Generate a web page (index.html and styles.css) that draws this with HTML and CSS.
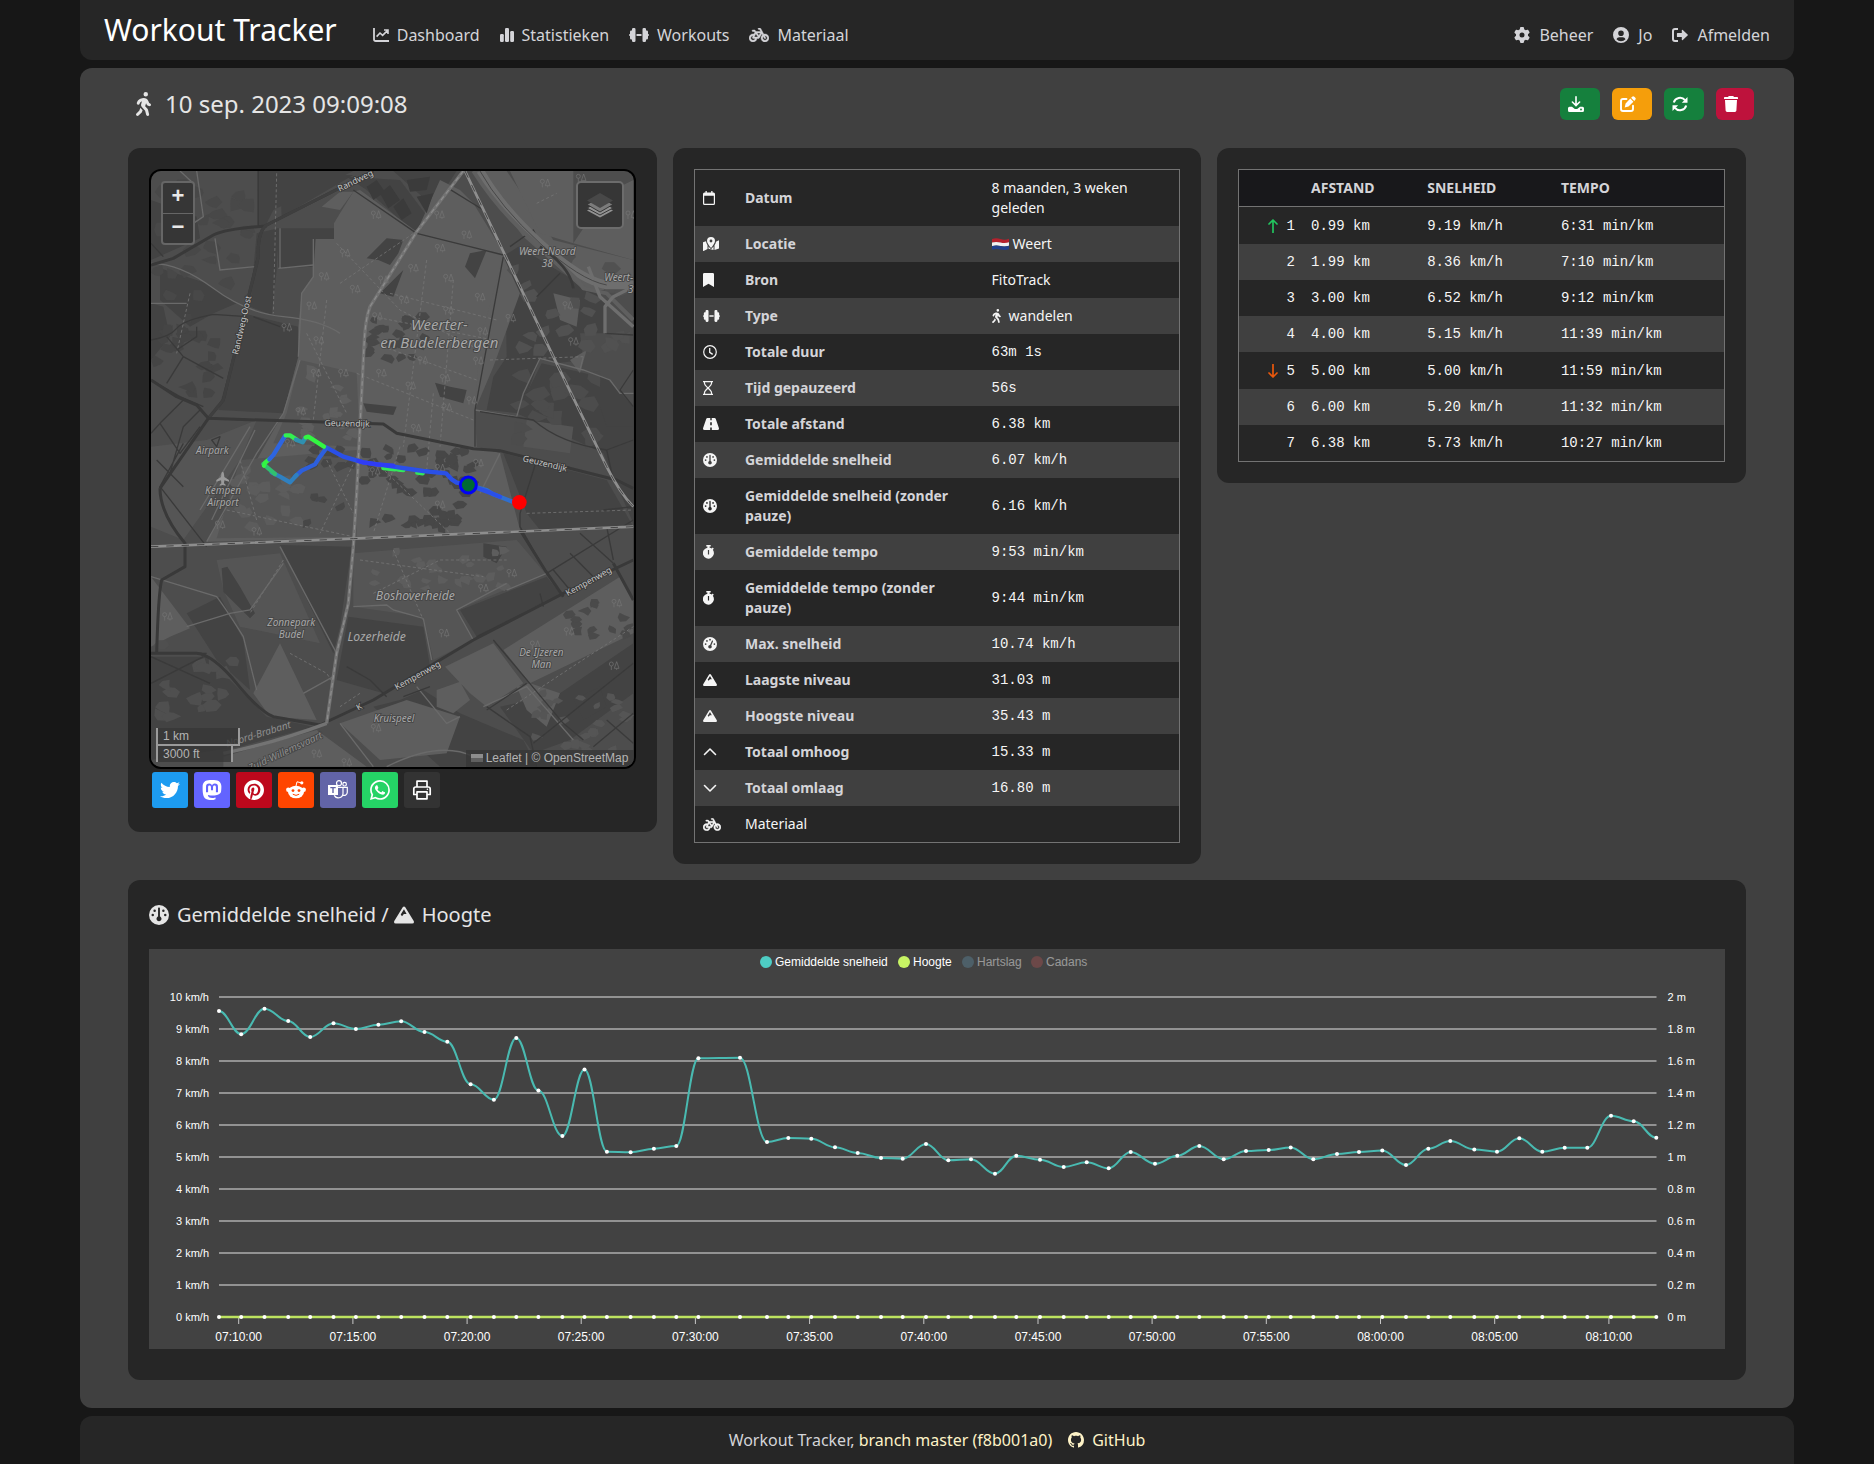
FILE: index.html
```html
<!DOCTYPE html>
<html lang="nl">
<head>
<meta charset="utf-8">
<title>Workout Tracker</title>
<link rel="stylesheet" href="styles.css">
</head>
<body>
<svg class="sprite" aria-hidden="true">
  <symbol id="i-line" viewBox="0 0 16 14"><path d="M1 0v11.2q0 1.8 1.8 1.8H16" fill="none" stroke="currentColor" stroke-width="1.8"/><path d="M3.6 8.6 7 5l2.6 2.4L14.4 2.6M11 2h4v4" fill="none" stroke="currentColor" stroke-width="1.6"/></symbol>
  <symbol id="i-bars" viewBox="0 0 14 14"><rect x="0" y="6" width="3.8" height="8" rx="1.2"/><rect x="5" y="0" width="4" height="14" rx="1.2"/><rect x="10.2" y="3" width="3.8" height="11" rx="1.2"/></symbol>
  <symbol id="i-dumbbell" viewBox="0 0 20 14"><path d="M3 1.300Q3 0 4.300 0h.9q1.300 0 1.300 1.300v11.400q0 1.300-1.300 1.300h-.9Q3 14 3 12.700V11.500H2.300Q1 11.500 1 10.200V8Q0 8 0 7t1-1V3.800Q1 2.500 2.300 2.500H3zM17 1.300Q17 0 15.700 0h-.9q-1.300 0-1.300 1.300v11.400q0 1.300 1.300 1.300h.9q1.300 0 1.300-1.300V11.500h.7q1.300 0 1.300-1.300V8q1 0 1-1t-1-1V3.800q0-1.300-1.300-1.300H17zM7.500 6h5v2h-5z"/></symbol>
  <symbol id="i-bike" viewBox="0 32 640 448"><path d="M312 32c-13.300 0-24 10.700-24 24s10.700 24 24 24h25.700l34.600 64H222.900l-27.400-38C191 99.700 183.700 96 176 96H120c-13.300 0-24 10.700-24 24s10.700 24 24 24h43.700l22.100 30.700-26.600 53.100c-10-2.500-20.500-3.800-31.200-3.800C57.300 224 0 281.300 0 352s57.300 128 128 128c65.300 0 119.100-48.900 127-112h49c8.500 0 16.300-4.500 20.700-11.800l84.800-143.500 21.700 40.100C402.400 276.300 384 312 384 352c0 70.700 57.300 128 128 128s128-57.300 128-128s-57.300-128-128-128c-13.500 0-26.500 2.100-38.700 6L375.400 48.800C369.800 38.400 359 32 347.200 32H312zM458.600 303.700l32.300 59.700c6.300 11.700 20.900 16 32.500 9.700s16-20.900 9.700-32.500l-32.300-59.700c3.600-.6 7.400-.9 11.200-.9c39.800 0 72 32.200 72 72s-32.200 72-72 72s-72-32.200-72-72c0-18.600 7-35.500 18.600-48.300zM133.200 368h65c-7.300 32.100-36 56-70.200 56c-39.800 0-72-32.200-72-72s32.200-72 72-72c1.700 0 3.400 .1 5.100 .2l-24.200 48.500c-9 18.100 4.100 39.400 24.300 39.400zm33.700-48l50.700-101.300 72.900 101.200-.1 .1H166.800zm90.600-128H365.900L317 274.800 257.400 192z" stroke="currentColor" stroke-width="14"/></symbol>
  <symbol id="i-gear" viewBox="0 0 512 512"><path d="M495.900 166.600c3.200 8.700 .5 18.400-6.400 24.600l-43.300 39.400c1.100 8.300 1.700 16.800 1.700 25.400s-.6 17.100-1.700 25.400l43.300 39.400c6.900 6.200 9.600 15.900 6.400 24.600c-4.400 11.900-9.700 23.300-15.800 34.300l-4.700 8.100c-6.600 11-14 21.400-22.100 31.200c-5.900 7.200-15.700 9.600-24.500 6.800l-55.700-17.700c-13.400 10.300-28.200 18.900-44 25.400l-12.500 57.100c-2 9.100-9 16.300-18.200 17.800c-13.800 2.300-28 3.500-42.500 3.500s-28.700-1.200-42.500-3.500c-9.200-1.500-16.200-8.700-18.200-17.800l-12.500-57.100c-15.800-6.500-30.600-15.100-44-25.400L83.100 425.900c-8.800 2.800-18.600 .3-24.500-6.800c-8.100-9.800-15.500-20.200-22.100-31.200l-4.700-8.100c-6.100-11-11.400-22.400-15.800-34.300c-3.200-8.700-.5-18.400 6.400-24.600l43.300-39.400C64.600 273.100 64 264.600 64 256s.6-17.100 1.700-25.400L22.400 191.200c-6.900-6.200-9.600-15.900-6.400-24.600c4.400-11.900 9.700-23.300 15.800-34.300l4.700-8.100c6.600-11 14-21.400 22.100-31.200c5.900-7.200 15.700-9.600 24.500-6.800l55.700 17.700c13.400-10.300 28.200-18.900 44-25.400l12.500-57.100c2-9.100 9-16.300 18.200-17.800C227.300 1.200 241.500 0 256 0s28.700 1.200 42.500 3.500c9.200 1.500 16.200 8.700 18.200 17.800l12.500 57.100c15.800 6.500 30.600 15.100 44 25.400l55.700-17.700c8.800-2.800 18.600-.3 24.500 6.800c8.100 9.800 15.500 20.200 22.100 31.200l4.700 8.100c6.100 11 11.400 22.400 15.800 34.300zM256 336a80 80 0 1 0 0-160 80 80 0 1 0 0 160z"/></symbol>
  <symbol id="i-user" viewBox="0 0 16 16"><path fill-rule="evenodd" d="M8 0a8 8 0 1 1 0 16A8 8 0 0 1 8 0zM8 3.400a2.800 2.800 0 1 0 0 5.600 2.800 2.800 0 0 0 0-5.600zM3.500 12.300a6.200 6.200 0 0 0 9 0C12 11 11 10.300 9.800 10.300H6.200c-1.200 0-2.200.7-2.700 2z"/></symbol>
  <symbol id="i-logout" viewBox="0 0 16 14"><path d="M6 1H3Q1 1 1 3v8q0 2 2 2h3" fill="none" stroke="currentColor" stroke-width="2"/><path d="M5.500 5h4.300V2.200q.2-.9 1-.3L15.600 6.500q.6.500 0 1l-4.800 4.600q-.8.500-1-.3V9H5.500q-.6 0-.6-.6V5.600Q4.900 5 5.500 5z"/></symbol>
  <symbol id="i-walk" viewBox="0 0 320 512"><path d="M160 48a48 48 0 1 1 96 0 48 48 0 1 1-96 0zM126.500 199.300c-1 .4-1.900 .8-2.900 1.200l-8 3.500c-16.400 7.300-29 21.200-34.700 38.200l-2.600 7.800c-5.600 16.800-23.700 25.800-40.500 20.200s-25.800-23.700-20.200-40.500l2.600-7.800c11.400-34.100 36.600-61.900 69.400-76.500l8-3.500c20.800-9.200 43.300-14 66.100-14c44.600 0 84.800 26.800 101.900 67.900L281 232.700l21.400 10.700c15.800 7.900 22.200 27.100 14.300 42.900s-27.100 22.200-42.900 14.300L247 287.300c-10.300-5.200-18.400-13.800-22.800-24.500l-9.600-23-19.300 65.500 49.500 54c5.400 5.900 9.200 13 11.200 20.800l23 92.100c4.300 17.100-6.100 34.500-23.300 38.800s-34.500-6.100-38.800-23.300l-22-88.100-70.700-77.100c-14.800-16.100-20.300-38.600-14.700-59.700l16.900-63.500zM68.700 398l25-62.400c2.100 3 4.500 5.800 7 8.600l40.700 44.400-14.500 36.200c-2.400 6-6 11.500-10.600 16.100L54.600 502.600c-12.500 12.500-32.800 12.500-45.300 0s-12.500-32.800 0-45.300L68.700 398z"/></symbol>
  <symbol id="i-download" viewBox="0 0 16 16"><path d="M8 .8v8.400M4.400 6 8 9.600 11.600 6" fill="none" stroke="currentColor" stroke-width="1.600" stroke-linecap="round"/><path fill-rule="evenodd" d="M1.500 10.800H4L6.800 13h2.400l2.800-2.200h2.500q1.500 0 1.500 1.500v2.200q0 1.500-1.500 1.500h-13Q0 16 0 14.500v-2.200q0-1.500 1.500-1.500zM13 12.600a.9.900 0 1 0 0 1.800.9.900 0 0 0 0-1.800z"/></symbol>
  <symbol id="i-edit" viewBox="0 0 16 16"><path d="M6.500 3H3Q1 3 1 5v8q0 2 2 2h8q2 0 2-2V9.700" fill="none" stroke="currentColor" stroke-width="1.900" stroke-linecap="round"/><path d="M12 .9q1-1.200 2.300-.2l1 1q1 1.200-.2 2.300l-.9.900-3.100-3.100zM10.300 2.600l3.100 3.100-4.900 4.900-3.800 1 .9-4z"/></symbol>
  <symbol id="i-refresh" viewBox="0 0 16 16"><path d="M1.800 6.500A6.400 6.400 0 0 1 13 4.200M14.200 9.500A6.400 6.400 0 0 1 3 11.800" fill="none" stroke="currentColor" stroke-width="2"/><path d="M15.500 1v5.700H9.800zM.5 15V9.300h5.700z"/></symbol>
  <symbol id="i-trash" viewBox="0 0 14 16"><path d="M4.800 0h4.400l.8 1h3.200q.8 0 .8.800V3H0V1.800Q0 1 .8 1H4zM1 4h12l-.6 10.600q-.1 1.400-1.500 1.400H3.100q-1.400 0-1.500-1.400z"/></symbol>
  <symbol id="i-calendar" viewBox="0 0 12 14"><path fill-rule="evenodd" d="M2.500 0h1.300v1.500h4.400V0h1.300v1.500h1q1.500 0 1.500 1.500v9.500q0 1.500-1.500 1.500h-9Q0 14 0 12.500V3q0-1.500 1.500-1.500h1zM1.200 4.800v7.400q0 .6.600.6h8.400q.6 0 .6-.6V4.800z"/></symbol>
  <symbol id="i-map" viewBox="0 0 16 14"><path d="M0 5.300 3 4.200q.3 2.300 1.500 4V12L.6 13.900q-.6.100-.6-.5zM11.500 8.300Q12.800 6.500 13 4.800l2.400-1.400q.6-.2.600.4v7.600L11.500 13zM5.500 9.500 8 12.300l2.500-2.800V13l-5-1.300z"/><path fill-rule="evenodd" d="M8 0a4 4 0 0 1 4 4c0 2-2.500 5.300-4 7C6.500 9.300 4 6 4 4a4 4 0 0 1 4-4zm0 2.600a1.400 1.400 0 1 0 0 2.800 1.400 1.400 0 0 0 0-2.800z"/></symbol>
  <symbol id="i-bookmark" viewBox="0 0 11 14"><path d="M1.300 0h8.400Q11 0 11 1.300V14l-5.500-3.200L0 14V1.300Q0 0 1.300 0z"/></symbol>
  <symbol id="i-clock" viewBox="0 0 14 14"><circle cx="7" cy="7" r="6.300" fill="none" stroke="currentColor" stroke-width="1.200"/><path d="M6.700 3v4.400l3 2" fill="none" stroke="currentColor" stroke-width="1.300"/></symbol>
  <symbol id="i-hourglass" viewBox="0 0 10 14"><path d="M0 .6h10M0 13.400h10M1.500 1v1.500C1.500 5 8.500 9 8.500 11.500V13M8.500 1v1.500C8.500 5 1.500 9 1.500 11.500V13" fill="none" stroke="currentColor" stroke-width="1.200"/></symbol>
  <symbol id="i-road" viewBox="0 0 16 12"><path fill-rule="evenodd" d="M4.500 0h2.800v2.200h1.400V0h2.800q.8 0 1.200.8L15.900 10q.4 2-1.400 2H8.800V9.500H7.200V12H1.500Q-.3 12 .1 10L3.300.8Q3.700 0 4.500 0zM7.200 4.200v3h1.600v-3z"/></symbol>
  <symbol id="i-gauge" viewBox="0 0 512 512"><path fill-rule="evenodd" d="M0 256a256 256 0 1 1 512 0A256 256 0 1 1 0 256zm320 96c0-26.900-16.500-49.900-40-59.300V88c0-13.300-10.700-24-24-24s-24 10.700-24 24V292.700c-23.500 9.500-40 32.500-40 59.300c0 35.300 28.700 64 64 64s64-28.700 64-64zM144 176a32 32 0 1 0 0-64 32 32 0 1 0 0 64zm-16 80a32 32 0 1 0-64 0 32 32 0 1 0 64 0zm288 32a32 32 0 1 0 0-64 32 32 0 1 0 0 64zM400 144a32 32 0 1 0-64 0 32 32 0 1 0 64 0z"/></symbol>
  <symbol id="i-gauge-max" viewBox="0 0 512 512"><path fill-rule="evenodd" d="M0 256a256 256 0 1 1 512 0A256 256 0 1 1 0 256zM288 96a32 32 0 1 0-64 0 32 32 0 1 0 64 0zM256 416c35.300 0 64-28.700 64-64c0-17.400-6.900-33.100-18.100-44.600L366 161.700c5.300-12.100-.2-26.300-12.300-31.600s-26.300 .2-31.600 12.300L257.900 288c-.6 0-1.300 0-1.900 0c-35.300 0-64 28.700-64 64s28.700 64 64 64zM176 144a32 32 0 1 0-64 0 32 32 0 1 0 64 0zM96 288a32 32 0 1 0 0-64 32 32 0 1 0 0 64zm352-32a32 32 0 1 0-64 0 32 32 0 1 0 64 0z"/></symbol>
  <symbol id="i-stopwatch" viewBox="0 0 11 14"><path fill-rule="evenodd" d="M3.300 0h4.400v1.600H6.600v1.100q1.300.2 2.200.9l.9-1 1.100 1.100-1 1.100A5.500 5.500 0 1 1 4.400 2.700V1.600H3.300zM4.900 5v4.500h1.200V5z"/></symbol>
  <symbol id="i-mountain" viewBox="0 0 14 12"><path fill-rule="evenodd" d="M6.100.5q.9-1 1.800 0l5.900 9.700q.6 1.700-1 1.800H1.200q-1.600-.1-1-1.800zM7 1.900 4.700 5.700l.9 1.100 1.300-1.500h1.900z"/></symbol>
  <symbol id="i-up" viewBox="0 0 14 14"><path d="m1.500 9.500 5.500-5.500 5.500 5.500" fill="none" stroke="currentColor" stroke-width="1.600" stroke-linecap="round" stroke-linejoin="round"/></symbol>
  <symbol id="i-down" viewBox="0 0 14 14"><path d="m1.500 4.500 5.500 5.500 5.500-5.500" fill="none" stroke="currentColor" stroke-width="1.600" stroke-linecap="round" stroke-linejoin="round"/></symbol>
  <symbol id="i-arrow" viewBox="0 0 10 14"><path d="M5 13.500V1M1 5l4-4 4 4" fill="none" stroke="currentColor" stroke-width="1.700" stroke-linecap="round" stroke-linejoin="round"/></symbol>
  <symbol id="i-flag" viewBox="0 0 17 12"><path fill="#b5212d" d="M0 1q4-1.500 8.500 0T17 .8V4.500q-4 1.200-8.500.2T0 4.700z"/><path fill="#f1f1f1" d="M0 4.500q4-1.200 8.500 0T17 4.300v3.500q-4 1.200-8.500.2T0 8.200z"/><path fill="#21408b" d="M0 8q4-1.200 8.500 0T17 7.800v3.500q-4 1.200-8.500.2T0 11.700z"/></symbol>
  <symbol id="i-github" viewBox="0 0 16 16"><path d="M8 0C3.580 0 0 3.580 0 8c0 3.540 2.290 6.530 5.470 7.590.4.070.55-.17.55-.38 0-.19-.01-.82-.01-1.490-2.010.37-2.530-.49-2.690-.94-.09-.23-.48-.94-.82-1.130-.28-.15-.68-.52-.01-.53.63-.01 1.080.58 1.230.82.72 1.210 1.870.87 2.330.66.070-.52.28-.87.51-1.070-1.780-.2-3.640-.89-3.640-3.950 0-.87.31-1.590.82-2.150-.08-.2-.36-1.020.08-2.120 0 0 .67-.21 2.200.82.64-.18 1.320-.27 2-.27s1.360.09 2 .27c1.530-1.040 2.200-.82 2.200-.82.44 1.100.16 1.920.08 2.120.51.56.82 1.270.82 2.150 0 3.070-1.870 3.750-3.650 3.950.29.25.54.73.54 1.480 0 1.070-.01 1.930-.01 2.200 0 .21.15.46.55.38A8.013 8.013 0 0 0 16 8c0-4.420-3.580-8-8-8z"/></symbol>
</svg>

<header class="topbar">
  <a class="brand">Workout Tracker</a>
  <nav class="menu">
    <a><svg width="16" height="14"><use href="#i-line"/></svg>Dashboard</a>
    <a><svg width="14" height="14"><use href="#i-bars"/></svg>Statistieken</a>
    <a><svg width="20" height="14"><use href="#i-dumbbell"/></svg>Workouts</a>
    <a><svg width="20" height="14"><use href="#i-bike"/></svg>Materiaal</a>
  </nav>
  <nav class="menu menu-user">
    <a><svg width="16" height="16"><use href="#i-gear"/></svg>Beheer</a>
    <a><svg width="16" height="16"><use href="#i-user"/></svg>Jo</a>
    <a><svg width="16" height="14"><use href="#i-logout"/></svg>Afmelden</a>
  </nav>
</header>

<main class="page">
  <div class="title-row">
    <h2><svg width="15" height="24"><use href="#i-walk"/></svg>10 sep. 2023 09:09:08</h2>
    <div class="actions">
      <a class="btn green"><svg width="16" height="16"><use href="#i-download"/></svg></a>
      <a class="btn amber"><svg width="16" height="16"><use href="#i-edit"/></svg></a>
      <a class="btn green"><svg width="16" height="16"><use href="#i-refresh"/></svg></a>
      <a class="btn red"><svg width="14" height="16"><use href="#i-trash"/></svg></a>
    </div>
  </div>

  <div class="columns">
    <section class="card card-map">
      <div class="map">
        <svg class="tiles" viewBox="33 33 1448 1788" preserveAspectRatio="xMinYMin slice">
          <rect x="33" y="33" width="1448" height="1788" fill="#4d4d4d"/>
          <g fill="#434343">
            <path d="M230 33H640L400 150 375 200 352 195V33zM420 45H640L425 170z"/>
            <path d="M410 205H582V237H527L520 320 415 325zM350 220 415 205 410 330 395 465 330 440 340 330z"/>
            <path d="M310 460 475 500V590L430 760 235 750 280 590z"/>
            <path d="M33 120 170 170 180 235 33 300zM60 325 200 370 290 430 220 460 150 500 60 420zM33 430 70 440 90 530 33 600z"/>
            <path d="M1095 285 1135 260 1400 420 1395 520 1320 520 1330 600 1250 610 1200 595 1140 760 1040 750 1060 650 1100 590z"/>
            <path d="M1205 610 1400 655 1480 740V1090L1390 880 1130 760zM1090 880 1400 960 1480 1100 1200 1110 1160 1060z"/>
            <path d="M620 50 780 60 870 180 820 215 680 90zM760 33H950L880 140z"/>
            <path d="M420 1155 635 1160 600 1400 580 1480zM625 1370 850 1400 870 1520 730 1600 590 1560z"/>
            <path d="M33 1490 200 1490 270 1560 380 1670 520 1700 300 1760 33 1800z"/>
            <path d="M140 1360 240 1310 310 1440 330 1590 230 1500zM960 1350 1220 1250 1260 1300 1010 1430z"/>
            <path d="M1260 1600 1480 1450V1600L1290 1740 1180 1780 1080 1640zM780 1620 850 1590 960 1660 1150 1740 1190 1820H900L700 1640z"/>
          </g>
          <g fill="#5e5e5e">
            <path d="M640 95 600 160 582 190V237H527L520 350 485 400 475 500V590L430 760 350 900 200 1145 630 1135 1140 1110 1080 880 1010 860 1005 750 1040 540 1095 285 1000 130 960 90 900 60 830 215 660 90z"/>
            <path d="M545 140 600 150 640 95 600 95zM1000 33H1100L1240 240 1480 300V390H1330L1150 230z"/>
            <path d="M1110 33 1300 33 1300 250 1200 220zM1400 100 1480 60V300L1300 250z"/>
            <path d="M33 1250 150 1405 90 1430 33 1460zM340 1600 420 1450 530 1680 390 1670z"/>
            <path d="M1090 1470 1440 1250 1480 1310V1420L1170 1570zM915 1520 1060 1450 1150 1570 1040 1640 990 1600zM890 1590 960 1565 990 1620 940 1660 890 1640zM1130 1580 1170 1570 1260 1600 1220 1700 1160 1650z"/>
            <path d="M600 1690 800 1620 960 1670 920 1780 720 1800zM250 1790 530 1710 680 1820H250z"/>
            <path d="M1020 540 1090 290 1140 400 1060 620 1005 750zM1290 600 1340 570 1320 640zM1240 400 1320 420 1310 500 1260 480z"/>
          </g>
          <g fill="#555">
            <path d="M640 1180 1130 1140 1215 1240 950 1350 1000 1440 880 1500 850 1370 640 1340z"/>
            <path d="M480 600 650 640 660 860 400 850 440 760z"/>
            <path d="M300 900 650 870V1130L230 1135zM33 860 200 840 350 780 300 900 130 1140 33 1100z"/>
            <path d="M230 1200 420 1180 540 1450 300 1400 250 1290zM1160 780 1300 800 1290 880 1150 860z"/>
          </g>
          <g fill="#434343">
            <path d="M680 295 740 235 790 240 775 280 750 315 715 300zM885 668 930 680 980 690 970 730 900 710zM670 730 770 740 760 765 680 755z"/>
            <path d="M245 1225 262 1220 300 1280 345 1360 330 1375 250 1295zM720 400 790 330 760 410zM990 280 1040 270 1005 355 975 320z"/>
            <path d="M680 80 710 60 735 95 700 120zM720 100 750 75 780 120 745 145zM760 140 790 115 815 160 785 180zM800 60 870 50 860 90 810 95zM830 110 880 100 860 160z" fill="#3b3b3b"/>
            <path d="M1030 1150 1100 1160 1070 1210 1030 1190zM1380 740H1480V800H1400zM1300 1620 1380 1580 1400 1640 1330 1680z"/>
          </g>
          <g id="clearings"></g>
          <g class="paths">
            <path d="M590 250 780 450 1000 560M600 370 850 200M700 470 1060 540M860 300 790 860M940 360 900 860M750 400 1070 480M500 520 620 760M560 420 520 780M730 560 1010 660M650 640 1000 780M880 700 860 930M660 870 540 1120M700 900 930 1120M780 860 700 1120M560 900 640 1060M1050 600 1330 590"/>
            <path d="M660 1200 1030 1250M700 1300 900 1200 1100 1200M760 1170 850 1380M430 1200 330 1360M450 1480 560 1540 580 1570M660 1600 600 1640M150 400 110 580M410 40 400 460M260 1050 640 1130M350 1080 300 900M1190 130 1250 100M1160 1060 1480 1050"/>
            <path d="M1100 1650 1480 1400" stroke="#999"/>
          </g>
          <g class="minor">
            <path d="M33 310Q120 310 220 385T430 470 600 520" stroke-width="4"/>
            <path d="M415 325 520 315M420 205V325M225 235 240 330 345 320M33 430H140"/>
            <path d="M1200 595 1330 630 1410 660 1440 700 1480 700M1330 590 1320 630"/>
            <path d="M33 1250 230 1310Q260 1350 310 1430L350 1590M430 1210 330 1350 270 1360 140 1400"/>
            <path d="M600 1690 700 1820M850 1375 875 1500M640 1340 740 1335 760 1350 850 1375" stroke-width="8"/>
            <path d="M1005 750 1130 770 1150 700 1200 595M480 600 430 760 350 880 200 1145M520 237 520 350 485 400 475 590" stroke-width="7"/>
            <path d="M420 1160 590 1480M490 1600 580 1550M1000 1440 950 1350 1100 1270M1220 1240 1100 1290M1020 1000 1080 880" stroke-width="8"/>
            <path d="M170 33 190 170 160 190M120 33 160 70" stroke-width="8"/>
            <path d="M1030 1640 1160 1580 1300 1740M960 1670 920 1690 830 1580M740 1820Q900 1740 1000 1790" stroke-width="6"/>
            <path d="M180 1050 330 800M215 1080 345 810" stroke-width="9"/>
          </g>
          <g class="road thin">
            <path d="M33 540Q90 530 110 505T220 463L320 470M33 660 120 710 190 740M80 530 130 590 250 655M130 590 80 670M170 500V530L110 570"/>
            <path d="M355 33V200M33 250 70 290M640 90 830 220 990 260 1090 285M1005 750 1090 290M1005 750V860M925 85 1030 150"/>
            <path d="M1020 755 1180 780Q1260 850 1400 870L1480 840M1480 630 1440 690 1480 740M1400 870 1420 960M1190 900 1140 1060V1100L1220 1240 1270 1310M1110 260 1180 210 1200 250M1190 410 1260 340M1395 520 1480 525"/>
            <path d="M1220 1240 1480 1080M1240 1230 1290 1290M1320 1120 1420 1210M1400 1100 1420 1200M1290 1180 1360 1250M1390 1050 1480 1040M1010 1430 1150 1360M1200 1300 1210 1340"/>
            <path d="M1060 1440 1270 1690 1330 1740M1160 1570 1040 1650M1040 1640 1170 1730 1190 1820M1480 1510 1180 1750M1480 1660 1360 1760M1400 1680 1480 1750"/>
            <path d="M33 1490 210 1570M33 1480H200M33 1570 190 1490M130 850 60 980 200 1160M90 940 130 800 180 750M60 790 130 720M33 820 60 790 120 880 180 800M50 900 130 980M620 1520 690 1560 740 1610M790 1610 870 1580M340 470 420 500M215 840 240 830 230 860z"/>
          </g>
          <g class="road">
            <path d="M33 315 100 295 220 225Q260 205 380 198" stroke-width="11"/>
            <path d="M700 33 380 195Q352 215 355 290L250 720 205 775 60 985" stroke-width="17"/>
            <path d="M700 33 380 195Q352 215 355 290L250 720 205 775" stroke-width="11" class="core"/>
            <path d="M33 660 110 710 170 735 205 775 730 792 770 820 1000 866 1080 872 1430 960 1480 985" stroke-width="15"/>
            <path d="M60 985Q60 1060 135 1150V1220L65 1260Q55 1300 50 1480"/>
            <path d="M33 1480H170Q220 1485 290 1570T400 1670L540 1695" stroke-width="12"/>
            <path d="M1480 1200 1270 1300 1000 1440 700 1620 540 1695" stroke-width="16"/>
            <path d="M1140 1110 1215 1230 1270 1310M1420 1210 1480 1320" stroke-width="9"/>
          </g>
          <g fill="none" stroke="#6e6e6e" stroke-linejoin="round">
            <path d="M1020 33Q1080 140 1200 250T1400 375L1480 375" stroke-width="26"/>
            <path d="M1000 33Q1080 160 1200 260T1330 385L1400 400 1480 480" stroke-width="12" stroke="#5f5f5f"/>
            <path d="M1480 380 1420 410 1395 440V520M1345 320 1380 410 1480 500" stroke-width="10"/>
            <path d="M1020 33Q1080 140 1200 250T1400 375" stroke-width="3" stroke="#484848"/>
            <path d="M1300 385Q1290 320 1200 260" stroke-width="8" stroke="#3a3a3a"/>
          </g>
          <path d="M970 33 830 215 690 440Q675 480 672 560L650 1000 640 1160 625 1330 590 1480 560 1690" class="canal"/>
          <path d="M970 33 830 215 690 440Q675 480 672 560L650 1000 640 1160 625 1330 590 1480 560 1690" class="canal-dash"/>
          <path d="M560 1690Q400 1750 250 1780" class="canal"/>
          <path d="M975 33 1240 590 1400 920Q1440 1000 1480 1040" class="rail"/>
          <path d="M975 33 1240 590 1400 920Q1440 1000 1480 1040" class="rail-dash"/>
          <path d="M33 1160 640 1136 1480 1100" class="rail"/>
          <path d="M33 1160 640 1136 1480 1100" class="rail-dash"/>
          <g class="trees" id="trees"></g>
          <path d="M248 935q4 0 4 8l1 8 14 9v5l-14-4-1 9 5 4v3l-9-2-9 2v-3l5-4-1-9-14 4v-5l14-9 1-8q0-8 4-8z" fill="#9a9a9a"/>
          <g class="labels">
            <g font-size="45"><text x="898" y="511">Weerter-</text><text x="898" y="565">en Budelerbergen</text></g>
            <g font-size="36.500"><text x="826" y="1320">Boshoverheide</text><text x="710" y="1443">Lozerheide</text></g>
            <g font-size="30">
              <text x="1222" y="286">Weert-Noord</text><text x="1222" y="322">38</text>
              <text x="1436" y="363">Weert-</text><text x="1472" y="398">3</text>
              <text x="217" y="881">Airpark</text>
              <text x="249" y="1003">Kempen</text><text x="249" y="1039">Airport</text>
              <text x="454" y="1398">Zonnepark</text><text x="454" y="1433">Budel</text>
              <text x="1204" y="1487">De IJzeren</text><text x="1204" y="1523">Man</text>
              <text x="762" y="1687">Kruispeel</text>
            </g>
            <g font-size="30" class="soft"><text transform="translate(358 1732) rotate(-17)">Noord-Brabant</text><text transform="translate(440 1784) rotate(-25)">Zuid-Willemsvaart</text></g>
            <g font-size="26" class="street">
              <text transform="translate(650 70) rotate(-26)">Randweg</text>
              <text transform="translate(314 497) rotate(-77)">Randweg-Oost</text>
              <text transform="translate(621 799) rotate(1)">Geuzendijk</text>
              <text transform="translate(1213 919) rotate(13)">Geuzendijk</text>
              <text transform="translate(1350 1272) rotate(-29)">Kempenweg</text>
              <text transform="translate(837 1554) rotate(-29)">Kempenweg</text>
              <text transform="translate(662 1648) rotate(-29)">K</text>
            </g>
          </g>
          <g class="track">
            <path stroke="#33e85a" stroke-width="5" d="M730 924 765 928M775 929 790 930M832 938 848 940"/>
            <path stroke="#2f6fd0" d="M1120 1026 1060 1003 1040 990 985 975"/>
            <path stroke="#2a50e8" d="M1080 1010 1050 998 985 975 950 968 935 958 918 940 850 933 760 920 670 907 610 890 560 863"/>
            <path stroke="#2f3cf5" d="M760 917 710 913 670 907 655 903"/>
            <path stroke="#2d5fdc" d="M560 863 540 890 525 913 485 932 465 950"/>
            <path stroke="#2f80c0" d="M470 945 450 967 420 950 395 937"/>
            <path stroke="#30c070" d="M405 942 385 925 370 912"/>
            <path stroke="#33f542" d="M372 917 375 908 388 898"/>
            <path stroke="#2d65e0" d="M388 898 400 885 435 828"/>
            <path stroke="#33f050" d="M437 826 450 826 470 839"/>
            <path stroke="#2f90b0" d="M468 839 488 847 495 835"/>
            <path stroke="#33f542" d="M497 832 505 830 552 860"/>
          </g>
          <circle cx="985" cy="975" r="24" fill="#006b33" stroke="#0202f5" stroke-width="9"/>
          <circle cx="1138" cy="1027" r="22" fill="#f00"/>
        </svg>
        <div class="zoomer"><a>+</a><a>−</a></div>
        <div class="layers"><svg width="28" height="28" viewBox="0 0 28 28"><path d="M14 13 27 20 14 27 1 20z" fill="#929292" transform="translate(0 -.5)"/><path d="M14 10 27 17 14 24 1 17z" fill="#929292" stroke="#363636"/><path d="M14 6 27 13.500 14 21 1 13.500z" fill="#7c7c7c" stroke="#363636"/><path d="M14 2 27 9.500 14 17 1 9.500z" fill="#484848"/></svg></div>
        <div class="scale"><span class="km">1 km</span><span class="ft">3000 ft</span></div>
        <div class="credit"><i></i>Leaflet | © OpenStreetMap</div>
      </div>
      <div class="share">
        <a class="tw"><svg width="20" height="20" viewBox="0 0 512 512"><path d="M459.370 151.716c.325 4.548.325 9.097.325 13.645 0 138.720-105.583 298.558-298.558 298.558-59.452 0-114.680-17.219-161.137-47.106 8.447.974 16.568 1.299 25.340 1.299 49.055 0 94.213-16.568 130.274-44.832-46.132-.975-84.792-31.188-98.112-72.772 6.498.974 12.995 1.624 19.818 1.624 9.421 0 18.843-1.300 27.614-3.573-48.081-9.747-84.143-51.980-84.143-102.985v-1.299c13.969 7.797 30.214 12.670 47.431 13.319-28.264-18.843-46.781-51.005-46.781-87.391 0-19.492 5.197-37.360 14.294-52.954 51.655 63.675 129.300 105.258 216.365 109.807-1.624-7.797-2.599-15.918-2.599-24.040 0-57.828 46.782-104.934 104.934-104.934 30.213 0 57.502 12.670 76.670 33.137 23.715-4.548 46.456-13.320 66.599-25.340-7.798 24.366-24.366 44.833-46.132 57.827 21.117-2.273 41.584-8.122 60.426-16.243-14.292 20.791-32.161 39.308-52.628 54.253z"/></svg></a>
        <a class="ma"><svg width="20" height="20" viewBox="0 0 16 16"><path d="M11.190 12.195c2.016-.24 3.770-1.475 3.990-2.603.348-1.778.32-4.339.32-4.339 0-3.470-2.286-4.488-2.286-4.488C12.062.238 10.083.017 8.027 0h-.05C5.920.017 3.942.238 2.790.765c0 0-2.285 1.017-2.285 4.488l-.002.662c-.004.64-.007 1.350.011 2.091.083 3.394.626 6.740 3.780 7.570 1.454.383 2.703.463 3.709.408 1.823-.1 2.847-.647 2.847-.647l-.06-1.317s-1.303.41-2.767.36c-1.450-.05-2.980-.156-3.215-1.928a3.614 3.614 0 0 1-.033-.496s1.424.346 3.228.428c1.103.05 2.137-.064 3.188-.189zm1.613-2.470H11.130v-4.080c0-.859-.364-1.295-1.091-1.295-.804 0-1.207.517-1.207 1.541v2.233H7.168V5.890c0-1.024-.403-1.541-1.207-1.541-.727 0-1.091.436-1.091 1.296v4.079H3.197V5.522c0-.859.22-1.541.66-2.046.456-.505 1.052-.764 1.793-.764.856 0 1.504.328 1.933.983L8 4.390l.417-.695c.429-.655 1.077-.983 1.934-.983.74 0 1.336.259 1.791.764.442.505.661 1.187.661 2.046v4.203z"/></svg></a>
        <a class="pi"><svg width="20" height="20" viewBox="0 0 24 24"><path d="M12 0C5.373 0 0 5.372 0 12c0 5.084 3.163 9.426 7.627 11.174-.105-.949-.2-2.405.042-3.441.218-.937 1.407-5.965 1.407-5.965s-.359-.719-.359-1.782c0-1.668.967-2.914 2.171-2.914 1.023 0 1.518.769 1.518 1.690 0 1.029-.655 2.568-.994 3.995-.283 1.194.599 2.169 1.777 2.169 2.133 0 3.772-2.249 3.772-5.495 0-2.873-2.064-4.882-5.012-4.882-3.414 0-5.418 2.561-5.418 5.207 0 1.031.397 2.138.893 2.738a.36.36 0 0 1 .083.345l-.333 1.360c-.053.22-.174.267-.402.161-1.499-.698-2.436-2.889-2.436-4.649 0-3.785 2.750-7.262 7.929-7.262 4.163 0 7.398 2.967 7.398 6.931 0 4.136-2.607 7.464-6.227 7.464-1.216 0-2.359-.631-2.750-1.378l-.748 2.853c-.271 1.043-1.002 2.350-1.492 3.146C9.570 23.812 10.763 24 12 24c6.627 0 12-5.373 12-12 0-6.628-5.373-12-12-12z"/></svg></a>
        <a class="re"><svg width="20" height="20" viewBox="0 0 20 20"><path d="M10 6 11 1.800l4.200 1" fill="none" stroke="#fff" stroke-width="1"/><circle cx="15.800" cy="2.800" r="1.600"/><circle cx="2.300" cy="9.800" r="2.200"/><circle cx="17.700" cy="9.800" r="2.200"/><ellipse cx="10" cy="12" rx="8" ry="6.300"/><g fill="#ff4500"><circle cx="7" cy="10.600" r="1.400"/><circle cx="13" cy="10.600" r="1.400"/></g><path d="M6.800 14.200q3.200 2.400 6.400 0" fill="none" stroke="#ff4500" stroke-width="1"/></svg></a>
        <a class="te"><svg width="20" height="20" viewBox="0 0 20 20"><path fill-rule="evenodd" d="M0 5h10v10H0zM2.300 7v1.300h2V13h1.400V8.300h2V7z"/><g fill="none" stroke="#fff" stroke-width="1.200"><circle cx="11" cy="3.200" r="2.500"/><circle cx="16.600" cy="4.200" r="1.800"/><path d="M10 7.300h5v6.200a4.700 4.700 0 0 1-8.800 1.900M15 7.300h4.300v5a3 3 0 0 1-4.500 2.600"/></g></svg></a>
        <a class="wa"><svg width="20" height="20" viewBox="0 0 16 16"><path d="M13.601 2.326A7.854 7.854 0 0 0 7.994 0C3.627 0 .068 3.558.064 7.926c0 1.399.366 2.760 1.057 3.965L0 16l4.204-1.102a7.933 7.933 0 0 0 3.790.965h.004c4.368 0 7.926-3.558 7.930-7.930A7.898 7.898 0 0 0 13.600 2.326zM7.994 14.521a6.573 6.573 0 0 1-3.356-.92l-.24-.144-2.494.654.666-2.433-.156-.251a6.560 6.560 0 0 1-1.007-3.505c0-3.626 2.957-6.584 6.591-6.584a6.560 6.560 0 0 1 4.660 1.931 6.557 6.557 0 0 1 1.928 4.660c-.004 3.639-2.961 6.592-6.592 6.592zm3.615-4.934c-.197-.099-1.170-.578-1.353-.646-.182-.065-.315-.099-.445.099-.133.197-.513.646-.627.775-.114.133-.232.148-.43.05-.197-.1-.836-.308-1.592-.985-.59-.525-.985-1.175-1.103-1.372-.114-.198-.011-.304.088-.403.087-.088.197-.232.296-.346.1-.114.133-.198.198-.33.065-.134.034-.248-.015-.347-.05-.099-.445-1.076-.612-1.470-.16-.389-.323-.335-.445-.34-.114-.007-.247-.007-.38-.007a.729.729 0 0 0-.529.247c-.182.198-.691.677-.691 1.654 0 .977.710 1.916.810 2.049.098.133 1.394 2.132 3.383 2.992.47.205.84.326 1.129.418.475.152.904.129 1.246.08.38-.058 1.171-.48 1.338-.943.164-.464.164-.86.114-.943-.049-.084-.182-.133-.38-.232z"/></svg></a>
        <a class="pr"><svg width="20" height="20" viewBox="0 0 20 20"><g fill="none" stroke="#fff" stroke-width="1.700" stroke-linejoin="round"><path d="M5 7V1.200h10V7M5 14.500H1.800V9q0-2 2-2h12.400q2 0 2 2v5.500H15"/><path d="M5 11.800h10v7H5z"/></g><circle cx="15.400" cy="9.300" r=".8"/></svg></a>
      </div>
    </section>

    <section class="card">
      <table class="facts">
        <colgroup><col class="f1"><col class="f2"><col></colgroup>
        <tr><td><svg width="12" height="14"><use href="#i-calendar"/></svg></td><th>Datum</th><td>8 maanden, 3 weken geleden</td></tr>
        <tr><td><svg width="16" height="14"><use href="#i-map"/></svg></td><th>Locatie</th><td><span class="inline flag"><svg width="17" height="12"><use href="#i-flag"/></svg>Weert</span></td></tr>
        <tr><td><svg width="11" height="14"><use href="#i-bookmark"/></svg></td><th>Bron</th><td>FitoTrack</td></tr>
        <tr><td><svg width="17" height="12"><use href="#i-dumbbell"/></svg></td><th>Type</th><td><span class="inline"><svg width="9" height="14"><use href="#i-walk"/></svg>wandelen</span></td></tr>
        <tr><td><svg width="14" height="14"><use href="#i-clock"/></svg></td><th>Totale duur</th><td class="mono">63m 1s</td></tr>
        <tr><td><svg width="10" height="14"><use href="#i-hourglass"/></svg></td><th>Tijd gepauzeerd</th><td class="mono">56s</td></tr>
        <tr><td><svg width="16" height="12"><use href="#i-road"/></svg></td><th>Totale afstand</th><td class="mono">6.38 km</td></tr>
        <tr><td><svg width="14" height="14"><use href="#i-gauge"/></svg></td><th>Gemiddelde snelheid</th><td class="mono">6.07 km/h</td></tr>
        <tr><td><svg width="14" height="14"><use href="#i-gauge"/></svg></td><th>Gemiddelde snelheid (zonder pauze)</th><td class="mono">6.16 km/h</td></tr>
        <tr><td><svg width="11" height="14"><use href="#i-stopwatch"/></svg></td><th>Gemiddelde tempo</th><td class="mono">9:53 min/km</td></tr>
        <tr><td><svg width="11" height="14"><use href="#i-stopwatch"/></svg></td><th>Gemiddelde tempo (zonder pauze)</th><td class="mono">9:44 min/km</td></tr>
        <tr><td><svg width="14" height="14"><use href="#i-gauge-max"/></svg></td><th>Max. snelheid</th><td class="mono">10.74 km/h</td></tr>
        <tr><td><svg width="14" height="12"><use href="#i-mountain"/></svg></td><th>Laagste niveau</th><td class="mono">31.03 m</td></tr>
        <tr><td><svg width="14" height="12"><use href="#i-mountain"/></svg></td><th>Hoogste niveau</th><td class="mono">35.43 m</td></tr>
        <tr><td><svg width="14" height="14"><use href="#i-up"/></svg></td><th>Totaal omhoog</th><td class="mono">15.33 m</td></tr>
        <tr><td><svg width="14" height="14"><use href="#i-down"/></svg></td><th>Totaal omlaag</th><td class="mono">16.80 m</td></tr>
        <tr><td><svg width="18" height="13"><use href="#i-bike"/></svg></td><td>Materiaal</td><td></td></tr>
      </table>
    </section>

    <section class="card">
      <table class="splits">
        <colgroup><col class="s1"><col class="s2"><col class="s3"><col></colgroup>
        <thead><tr><th></th><th>AFSTAND</th><th>SNELHEID</th><th>TEMPO</th></tr></thead>
        <tbody class="mono">
        <tr class="tall"><td><span class="rank"><svg class="best" width="10" height="14"><use href="#i-arrow"/></svg>1</span></td><td>0.99 km</td><td>9.19 km/h</td><td>6:31 min/km</td></tr>
        <tr><td>2</td><td>1.99 km</td><td>8.36 km/h</td><td>7:10 min/km</td></tr>
        <tr><td>3</td><td>3.00 km</td><td>6.52 km/h</td><td>9:12 min/km</td></tr>
        <tr><td>4</td><td>4.00 km</td><td>5.15 km/h</td><td>11:39 min/km</td></tr>
        <tr class="tall"><td><span class="rank"><svg class="worst" width="10" height="14"><use href="#i-arrow"/></svg>5</span></td><td>5.00 km</td><td>5.00 km/h</td><td>11:59 min/km</td></tr>
        <tr><td>6</td><td>6.00 km</td><td>5.20 km/h</td><td>11:32 min/km</td></tr>
        <tr><td>7</td><td>6.38 km</td><td>5.73 km/h</td><td>10:27 min/km</td></tr>
        </tbody>
      </table>
    </section>
  </div>

  <section class="card card-chart">
    <h3><svg width="20" height="20"><use href="#i-gauge"/></svg><span>Gemiddelde snelheid /</span><svg class="second" width="20" height="18"><use href="#i-mountain"/></svg><span>Hoogte</span></h3>
    <svg class="chart" id="chart" viewBox="0 0 1576 400" width="1576" height="400"></svg>
  </section>
</main>

<footer class="footer">
  <span>Workout Tracker, <a>branch master (f8b001a0)</a></span>
  <a class="gh"><svg width="16" height="16"><use href="#i-github"/></svg>GitHub</a>
</footer>
<script src="script.js"></script>
</body>
</html>
```
FILE: styles.css
```css
* { box-sizing: border-box; }

body {
  margin: 0;
  padding: 0 80px;
  height: 1464px;
  background: #171717;
  color: #f5f5f5;
  font: 16px/24px "Noto Sans", sans-serif;
  overflow: hidden;
}

svg { fill: currentColor; flex: none; }
.sprite { position: absolute; width: 0; height: 0; }
.mono { font-family: "Liberation Mono", monospace; }

.topbar {
  display: flex;
  align-items: flex-start;
  height: 60px;
  padding: 12px 24px 0;
  background: #262626;
  border-radius: 0 0 12px 12px;
}
.brand { font-size: 30px; line-height: 36px; color: #fff; margin-right: 36px; }
.menu { display: flex; gap: 20px; padding-top: 11px; color: #d4d4d8; }
.menu a { display: flex; align-items: center; gap: 8px; }
.menu-user { margin-left: auto; }
.menu-user a { gap: 9px; }

.page {
  height: 1340px;
  margin-top: 8px;
  padding: 20px 48px 0;
  background: #404040;
  border-radius: 12px;
}
.title-row { display: flex; justify-content: space-between; height: 32px; margin: 0 -8px 28px 8px; }
h2, h3 { margin: 0; font-weight: 400; color: #e5e5e5; display: flex; align-items: center; }
h2 { font-size: 24px; line-height: 32px; gap: 14px; }
.actions { display: flex; gap: 12px; }
.btn { display: flex; align-items: center; height: 32px; padding: 0 16px 0 8px; border-radius: 6px; color: #fff; }
.green { background: #15803d; }
.amber { background: #f59e0b; }
.red { background: #be123c; }

.columns { display: grid; grid-template-columns: repeat(3, 1fr); gap: 16px; align-items: start; }
.card { background: #262626; border-radius: 12px; padding: 21px; }
.card-map { height: 684px; }

.map {
  position: relative;
  height: 600px;
  border: 2px solid #000;
  border-radius: 12px;
  overflow: hidden;
  font: 12px/16px "Liberation Sans", sans-serif;
  color: #b4b4b4;
}
.tiles { display: block; width: 100%; height: 100%; }
.tiles .paths path { fill: none; stroke: #757575; stroke-width: 2.5; stroke-dasharray: 9 7; }
.tiles .minor path { fill: none; stroke: #6a6a6a; stroke-width: 4; }
.tiles .road path { fill: none; stroke: #393939; stroke-width: 9; stroke-linejoin: round; }
.tiles .road.thin path { stroke-width: 4; stroke: #3a3a3a; }
.tiles .road .core { stroke: #3f3f3f; }
.canal { fill: none; stroke: #737373; stroke-width: 10; }
.canal-dash { fill: none; stroke: #8e8e8e; stroke-width: 3.5; stroke-dasharray: 14 10; }
.rail { fill: none; stroke: #8e8e8e; stroke-width: 8; }
.rail-dash { fill: none; stroke: #444; stroke-width: 3; stroke-dasharray: 22 24; }
.trees path { fill: none; stroke: #757575; stroke-width: 2; }
.labels text {
  font-family: "Noto Sans", sans-serif;
  font-style: italic;
  text-anchor: middle;
  fill: #a8a8a8;
  stroke: #444;
  stroke-width: 5;
  paint-order: stroke;
}
.labels .soft text { fill: #8e8e8e; }
.labels .street text { font-style: normal; fill: #c6c6c6; stroke: #383838; }
.track path { fill: none; stroke-width: 13; stroke-linecap: round; stroke-linejoin: round; }

.zoomer { position: absolute; left: 10px; top: 10px; width: 34px; height: 64px; border: 2px solid #666; border-radius: 4px; background: #363636; }
.zoomer a { display: block; height: 30px; text-align: center; font: bold 22px/26px "Liberation Sans", sans-serif; color: #e8e8e8; }
.zoomer a + a { border-top: 1px solid #666; }
.layers { position: absolute; right: 10px; top: 10px; width: 48px; height: 48px; border: 2px solid #6c6c6c; border-radius: 5px; background: #363636; display: flex; align-items: center; justify-content: center; }
.scale { position: absolute; left: 5px; bottom: 5px; display: flex; flex-direction: column; align-items: flex-start; }
.scale span { border: 2px solid #9a9a9a; border-top: 0; padding: 0 5px; height: 18px; line-height: 16px; background: rgba(55, 55, 55, .8); }
.scale .km { width: 84px; }
.scale .ft { width: 77px; height: 16px; border-bottom: 0; line-height: 16px; }
.credit { position: absolute; right: 0; bottom: 0; width: 168px; height: 17px; padding: 0 0 2px 5px; display: flex; align-items: center; background: rgba(55, 55, 55, .8); white-space: nowrap; }
.credit i { width: 12px; height: 8px; margin-right: 3px; background: linear-gradient(#8d8d8d 50%, #606060 50%); }

.share { display: flex; gap: 6px; padding: 3px 3px 0; }
.share a { display: flex; align-items: center; justify-content: center; width: 36px; height: 36px; border-radius: 3px; color: #fff; }
.tw { background: #1d9bf0; }
.ma { background: #6364ff; }
.pi { background: #bd081c; }
.re { background: #ff4500; }
.te { background: #6264a7; }
.wa { background: #25d366; }
.pr { background: #333; }

table { width: 100%; table-layout: fixed; border: 1px solid #737373; border-spacing: 0; font-size: 14px; line-height: 20px; }
td, th { padding: 8px; text-align: left; vertical-align: middle; }
td > svg { display: block; }
th { color: #d4d4d8; font-weight: 700; }
.facts tr:nth-child(even), .splits tbody tr:nth-child(even) { background: #404040; }
.f1 { width: 42.300px; }
.f2 { width: 246.600px; }
.inline { display: flex; align-items: center; gap: 8px; }
.flag { gap: 4px; }

.s1 { width: 63.700px; }
.s2 { width: 116.200px; }
.s3 { width: 133.700px; }
.splits thead { background: #18181b; }
.splits thead th { border-bottom: 1px solid #737373; }
.splits td { height: 36px; }
.splits .tall td { height: 37px; padding-top: 9px; }
.splits td:first-child { text-align: right; }
.rank { display: flex; align-items: center; justify-content: flex-end; gap: 9px; }
.rank svg { margin-top: -1px; }
.best { color: #22c55e; }
.worst { color: #ea580c; transform: scaleY(-1); }

.card-chart { height: 500px; margin-top: 16px; }
h3 { font-size: 20px; line-height: 28px; gap: 8px; margin-bottom: 20px; }
h3 .second { margin-left: -3px; }
.chart { display: block; background: #424242; }
.chart text { font-family: "Liberation Sans", sans-serif; fill: #fff; }
.chart .axis text { font-size: 11px; }
.chart .time text, .chart .legend text { font-size: 12px; }
.chart .grid { stroke: #929292; stroke-width: 2; }
.chart .tick { stroke: #c8c8c8; }
.chart .speed { fill: none; stroke: #49bab1; stroke-width: 2; }
.chart .height { stroke: #bde35f; stroke-width: 2.5; }
.chart .off { opacity: .45; }

.footer {
  display: flex;
  justify-content: center;
  gap: 16px;
  margin-top: 8px;
  height: 48px;
  padding-top: 12px;
  background: #262626;
  border-radius: 12px 12px 0 0;
  color: #d4d4d8;
}
.footer a { color: #fef3c7; }
.gh { display: flex; align-items: center; gap: 8px; height: 24px; }
```
FILE: script.js
```js
// Average speed per minute, in chart pixels.
const speed = [
  [70,62],[92.2,85.2],[115.5,59.7],[139.2,72],[161.2,88],[184.5,74.3],[206.9,80],[229.4,75.7],[252.2,72.2],[275.5,83],
  [298.3,92.7],[321.6,135.3],[344.9,150.7],[367.3,89],[389.4,141.5],[413.4,187],[435.5,120.6],[457.9,202.7],[481.6,203.3],
  [504.9,199.7],[527.3,197],[549.4,109.2],[591,108.7],[618,193],[639.3,189],[662.3,189.7],[686,198.3],[708.7,204],[732,209],
  [753.7,209.7],[777,195],[799.3,211.3],[822,210.3],[846,224.7],[867.3,206.7],[891,210.7],[914.7,218],[937.7,213.3],
  [959.7,219.3],[981.7,203],[1006,214.8],[1028.3,206.8],[1050.3,197],[1074.7,210.2],[1097,202],[1119.7,201],[1141.7,198.4],
  [1164.3,210.2],[1188,205],[1210,202.9],[1233.3,201.4],[1257,216],[1279.3,199.7],[1301.3,192],[1325.3,200.5],[1348,202.7],
  [1370.3,189.2],[1393.3,202.8],[1415.7,198.7],[1438.3,198.7],[1462,166.7],[1484.7,172.2],[1507.3,188.8]
];

let out = '<g class="axis">';
for (let i = 0; i <= 10; i++) {
  const y = 48 + i * 32;
  if (i < 10) out += `<path class="grid" d="M70 ${y}H1507.500"/>`;
  out += `<text x="60" y="${y + 4}" text-anchor="end">${10 - i} km/h</text>`;
  out += `<text x="1518.500" y="${y + 4}">${+(2 - i * 0.2).toFixed(1)} m</text>`;
}
out += '</g><g class="time">';
for (let i = 0; i <= 12; i++) {
  const x = 89.7 + i * 114.18;
  const m = 10 + i * 5;
  const label = `${m < 60 ? '07' : '08'}:${String(m % 60).padStart(2, '0')}:00`;
  out += `<path class="tick" d="M${x.toFixed(1)} 368v7"/><text x="${x.toFixed(1)}" y="392" text-anchor="middle">${label}</text>`;
}
out += '</g>';

let d = `M${speed[0]}`;
for (let i = 1; i < speed.length; i++) {
  const [px, py] = speed[i - 1];
  const [x, y] = speed[i];
  const k = (x - px) * 0.4;
  d += `C${px + k} ${py} ${x - k} ${y} ${x} ${y}`;
}
out += `<path class="speed" d="${d}"/><path class="height" d="M70 368H1507.500"/>`;
for (const [x, y] of speed) {
  out += `<circle cx="${x}" cy="${y}" r="2" fill="#fff"/><circle cx="${x}" cy="368" r="2" fill="#fff"/>`;
}

out += '<g class="legend">';
for (const [x, color, name, off] of [
  [617, '#4ecdc4', 'Gemiddelde snelheid', 0], [755, '#c7f464', 'Hoogte', 0],
  [819, '#5b8296', 'Hartslag', 1], [888, '#a05050', 'Cadans', 1]
]) {
  out += `<g${off ? ' class="off"' : ''}><circle cx="${x}" cy="13" r="6" fill="${color}"/><text x="${x + 9}" y="17">${name}</text></g>`;
}
document.getElementById('chart').innerHTML = out + '</g>';

// Woodland markers on the map: one round and one pointed tree.
const woods = [[708,165],[898,165],[615,280],[980,225],[900,265],[820,325],[645,388],[730,360],[552,350],[792,420],
  [925,355],[1020,412],[515,438],[712,470],[925,452],[1028,515],[1112,475],[1283,437],[536,542],[440,503],[848,602],
  [1015,603],[528,640],[610,640],[724,640],[915,655],[812,678],[995,722],[920,743],[482,755],[828,805],[450,850],
  [705,935],[900,925],[1015,910],[240,1095],[350,1115],[900,1035],[1115,1240],[1030,1285],[82,1370],[912,1420],
  [1287,1415],[1430,1330],[1422,1518],[708,1705],[530,1782],[620,1808],[1323,55],[1215,70],[1472,165],[1185,1455],[1300,545]];
document.getElementById('trees').innerHTML = woods.map(([x, y]) =>
  `<circle cx="${x - 8}" cy="${y - 6}" r="6" fill="none" stroke="#757575" stroke-width="2"/><path d="M${x - 8} ${y}V${y + 12}M${x + 8} ${y + 12}v-5h-7l7-20 7 20h-7"/>`).join('');

// Heath clearings and farm plots: irregular patches from a fixed seed.
let seed = 7;
const rnd = () => (seed = (seed * 16807) % 2147483647) / 2147483647;
const areas = [
  [500, 860, 1000, 1110, 70, 26, '#474747'], [680, 470, 860, 600, 26, 24, '#484848'], [680, 1170, 1120, 1320, 26, 24, '#5d5d5d'],
  [50, 60, 330, 440, 26, 34, '#484848'], [50, 460, 240, 700, 22, 30, '#454545'], [480, 600, 640, 860, 16, 26, '#5f5f5f'],
  [250, 920, 480, 1110, 18, 30, '#5c5c5c'], [1120, 280, 1460, 580, 24, 34, '#515151'], [1080, 640, 1470, 860, 18, 40, '#4c4c4c'],
  [1180, 1600, 1470, 1780, 26, 24, '#555'], [50, 1450, 300, 1700, 18, 34, '#4f4f4f'], [1280, 1310, 1470, 1430, 14, 22, '#4a4a4a']
];
let patches = '';
for (const [x0, y0, x1, y1, n, size, fill] of areas) {
  for (let i = 0; i < n; i++) {
    const cx = x0 + rnd() * (x1 - x0), cy = y0 + rnd() * (y1 - y0);
    const pts = [];
    for (let a = 0; a < 6; a++) {
      const r = size * (0.35 + rnd() * 0.65);
      pts.push(`${(cx + Math.cos(a * 1.047) * r).toFixed(0)},${(cy + Math.sin(a * 1.047) * r * 0.75).toFixed(0)}`);
    }
    patches += `<polygon points="${pts.join(' ')}" fill="${fill}"/>`;
  }
}
document.getElementById('clearings').innerHTML = patches;
```
